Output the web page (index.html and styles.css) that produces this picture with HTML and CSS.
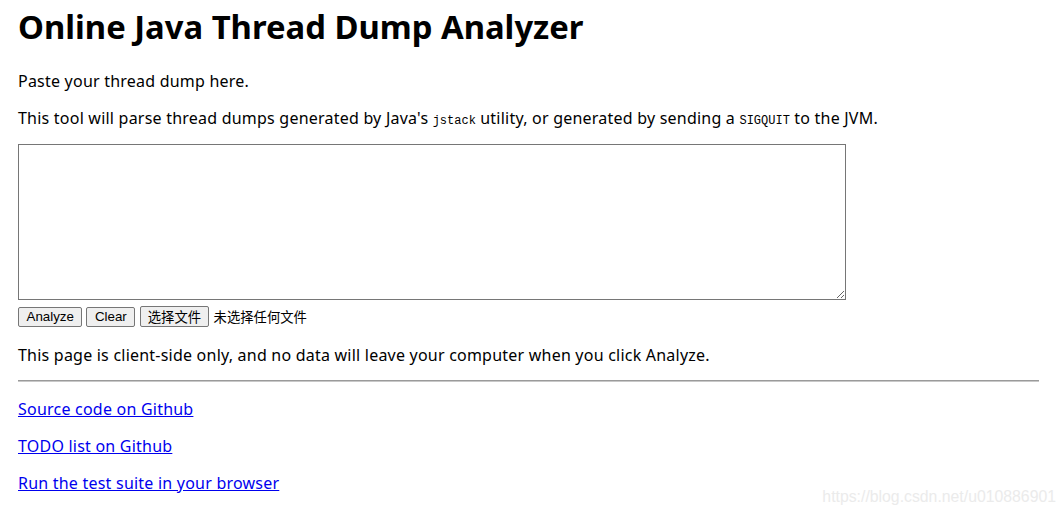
FILE: index.html
```html
<!DOCTYPE html>
<html lang="en">
<head>
<meta charset="utf-8">
<title>Online Java Thread Dump Analyzer</title>
<link rel="stylesheet" href="styles.css">
</head>
<body>
<div class="page">
  <h1 class="title">Online Java Thread Dump Analyzer</h1>
  <p class="para">Paste your thread dump here.</p>
  <p class="para intro">This tool will parse thread dumps generated by Java's <code class="mono">jstack</code> utility, or generated by sending a <code class="mono">SIGQUIT</code> to the JVM.</p>
  <form class="dump-form">
    <textarea class="dump-input"></textarea>
    <div class="controls">
      <button type="button" class="btn">Analyze</button>
      <button type="button" class="btn">Clear</button>
      <span class="file-picker">
        <button type="button" class="btn btn-file">选择文件</button>
        <span class="file-status">未选择任何文件</span>
      </span>
    </div>
  </form>
  <p class="para note">This page is client-side only, and no data will leave your computer when you click Analyze.</p>
  <hr class="rule">
  <p class="para"><a class="link" href="#">Source code on Github</a></p>
  <p class="para"><a class="link" href="#">TODO list on Github</a></p>
  <p class="para"><a class="link" href="#">Run the test suite in your browser</a></p>
</div>
<div class="watermark">https://blog.csdn.net/u010886901</div>
</body>
</html>
```
FILE: styles.css
```css
html, body {
  margin: 0;
  padding: 0;
  background: #fff;
}
body {
  font-family: "Noto Sans", "Noto Sans CJK SC", sans-serif;
  font-size: 16px;
  color: #000;
  position: relative;
  height: 517px;
  overflow: hidden;
}
.page {
  width: 1021px;
  padding: 7px 0 0 18px;
}
.title {
  font-size: 32.8px;
  font-weight: bold;
  line-height: 40px;
  margin: 0 0 24px;
}
.para {
  margin: 16px 0;
  line-height: 21px;
  letter-spacing: 0.22px;
}
.title + .para {
  margin-top: 0;
}
.intro {
  margin-bottom: 12px;
}
.mono {
  font-family: "Liberation Mono", monospace;
  font-size: 12px;
  letter-spacing: 0;
}
.dump-form {
  margin: 0;
}
.dump-input {
  display: block;
  box-sizing: border-box;
  width: 828px;
  height: 156px;
  margin: 0;
  border: 1px solid #767676;
  border-radius: 0;
  padding: 2px;
  resize: both;
  background: #fff;
}
.controls {
  display: flex;
  align-items: flex-end;
  gap: 4px;
  margin-top: 5px;
  height: 22px;
}
.btn {
  box-sizing: border-box;
  height: 20px;
  padding: 0 7.5px;
  margin: 0;
  font-family: "Liberation Sans", "Noto Sans CJK SC", sans-serif;
  font-size: 13.33px;
  color: #000;
  background: #efefef;
  border: 1px solid #767676;
  border-radius: 2px;
  line-height: 18px;
}
.file-picker {
  display: flex;
  align-items: flex-end;
  gap: 5px;
  margin-left: 1px;
}
.btn-file {
  height: 21px;
  padding: 0 6.5px;
  font-family: "Noto Sans CJK SC", sans-serif;
}
.file-status {
  font-family: "Noto Sans CJK SC", sans-serif;
  font-size: 13.33px;
  line-height: 20px;
  color: #000;
}
.note {
  margin-top: 18px;
  margin-bottom: 14px;
}
.rule {
  margin: 14px 0 17px;
  height: 0;
  border: 0;
  border-top: 1px solid #9a9a9a;
  border-bottom: 1px solid #c8c8c8;
}
.link {
  color: #0000ee;
  text-decoration: underline;
}
.watermark {
  position: absolute;
  right: 8px;
  top: 488px;
  font-family: "Liberation Sans", sans-serif;
  font-size: 15.8px;
  color: #ebebeb;
}
```
